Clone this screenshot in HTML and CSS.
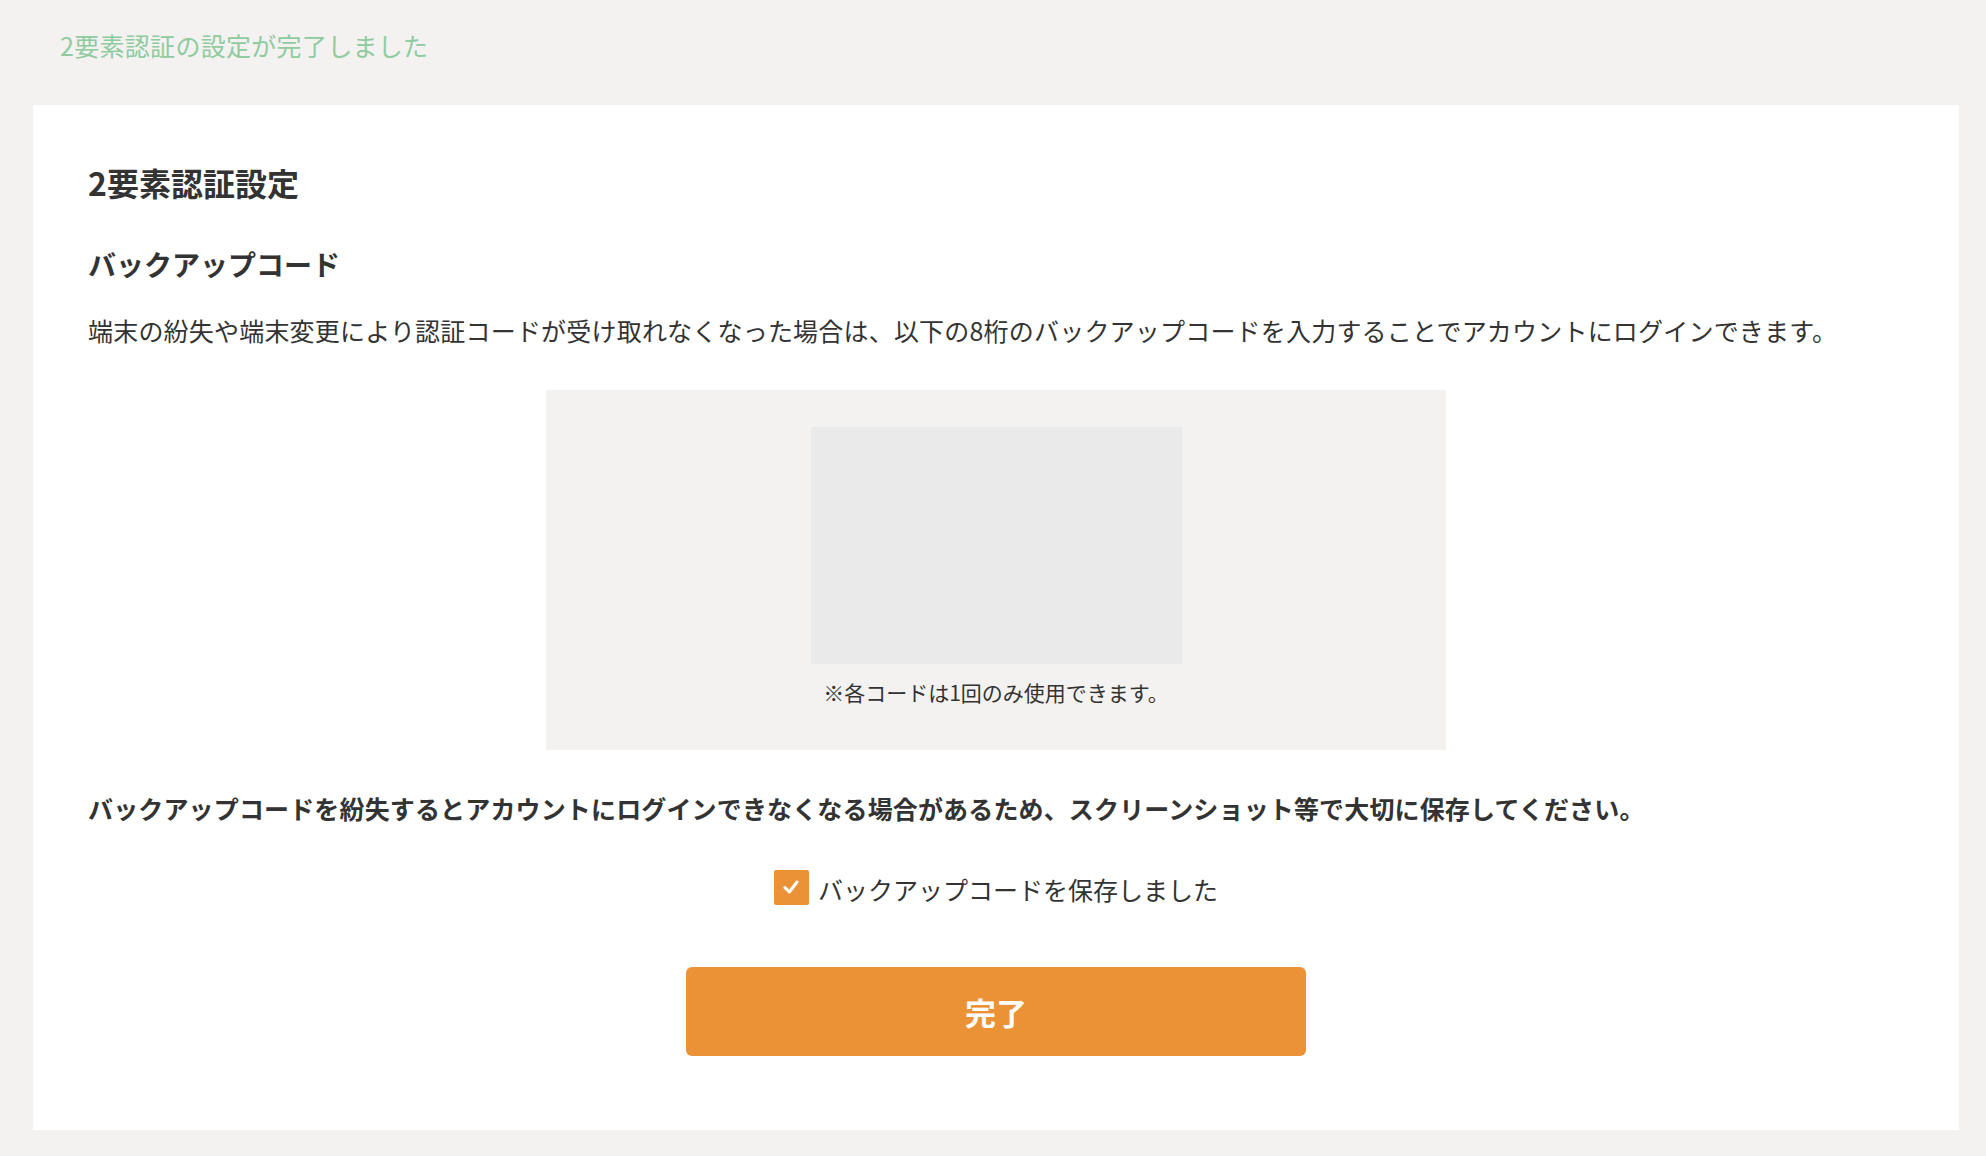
FILE: index.html
```html
<!DOCTYPE html>
<html lang="ja">
<head>
<meta charset="utf-8">
<title>2要素認証設定</title>
<link rel="stylesheet" href="styles.css">
</head>
<body>
<div class="page">
  <p class="flash">2要素認証の設定が完了しました</p>
  <main class="card">
    <h1 class="title">2要素認証設定</h1>
    <h2 class="subtitle">バックアップコード</h2>
    <p class="desc">端末の紛失や端末変更により認証コードが受け取れなくなった場合は、以下の8桁のバックアップコードを入力することでアカウントにログインできます。</p>
    <section class="codes">
      <div class="codes-list"></div>
      <p class="codes-note">※各コードは1回のみ使用できます。</p>
    </section>
    <p class="warning">バックアップコードを紛失するとアカウントにログインできなくなる場合があるため、スクリーンショット等で大切に保存してください。</p>
    <label class="check-row">
      <span class="check-box">
        <svg width="22" height="22" viewBox="0 0 20 20"><path d="M4.5 10.5 L8.5 14.5 L15.5 5.5" fill="none" stroke="#fff" stroke-width="2.8" stroke-linecap="round" stroke-linejoin="round"/></svg>
      </span>
      <span class="check-label">バックアップコードを保存しました</span>
    </label>
    <div class="actions">
      <button class="btn-done" type="button">完了</button>
    </div>
  </main>
</div>
</body>
</html>
```
FILE: styles.css
```css
html, body {
  margin: 0;
  padding: 0;
}
body {
  background: #f3f2f0;
  font-family: "Noto Sans CJK JP", "Noto Sans", sans-serif;
  color: #333;
  width: 1986px;
  height: 1156px;
  overflow: hidden;
}
.page {
  padding-top: 27px;
}
.flash {
  margin: 0 0 0 60px;
  font-size: 25px;
  line-height: 36px;
  letter-spacing: 0.3px;
  color: #8fcb9f;
}
.card {
  margin: 42px 0 0 33px;
  width: 1926px;
  box-sizing: border-box;
  background: #fff;
  padding: 55px 55px 74px;
  display: flex;
  flex-direction: column;
}
.title {
  margin: 0;
  font-size: 32px;
  line-height: 44px;
  font-weight: 700;
  color: #333;
}
.subtitle {
  margin: 40px 0 0;
  font-size: 28px;
  line-height: 40px;
  font-weight: 700;
  color: #333;
}
.desc {
  margin: 28px 0 0;
  font-size: 25px;
  line-height: 36px;
  letter-spacing: 0.2px;
  color: #333;
}
.codes {
  margin: 42px auto 0;
  width: 900px;
  box-sizing: border-box;
  background: #f3f2f0;
  padding: 37px 0 43px;
  display: flex;
  flex-direction: column;
  align-items: center;
}
.codes-list {
  width: 371px;
  height: 237px;
  background: #eaeaea;
}
.codes-note {
  margin: 13px 0 0;
  font-size: 21px;
  line-height: 30px;
  color: #333;
}
.warning {
  margin: 40px 0 0;
  font-size: 25px;
  line-height: 36px;
  letter-spacing: 0.15px;
  font-weight: 700;
  color: #333;
}
.check-row {
  margin: 43px auto 0;
  display: flex;
  align-items: center;
  gap: 9px;
  height: 36px;
}
.check-box {
  width: 35px;
  height: 35px;
  background: #ec9236;
  border-radius: 2px;
  display: flex;
  align-items: center;
  justify-content: center;
}
.check-label {
  font-size: 25px;
  line-height: 36px;
  color: #333;
  margin-top: 4px;
}
.actions {
  margin-top: 62px;
  display: flex;
  justify-content: center;
}
.btn-done {
  width: 620px;
  height: 89px;
  border: none;
  border-radius: 6px;
  background: #ec9236;
  color: #fff;
  font-family: "Noto Sans CJK JP", "Noto Sans", sans-serif;
  font-size: 31px;
  font-weight: 700;
  cursor: pointer;
}
```
